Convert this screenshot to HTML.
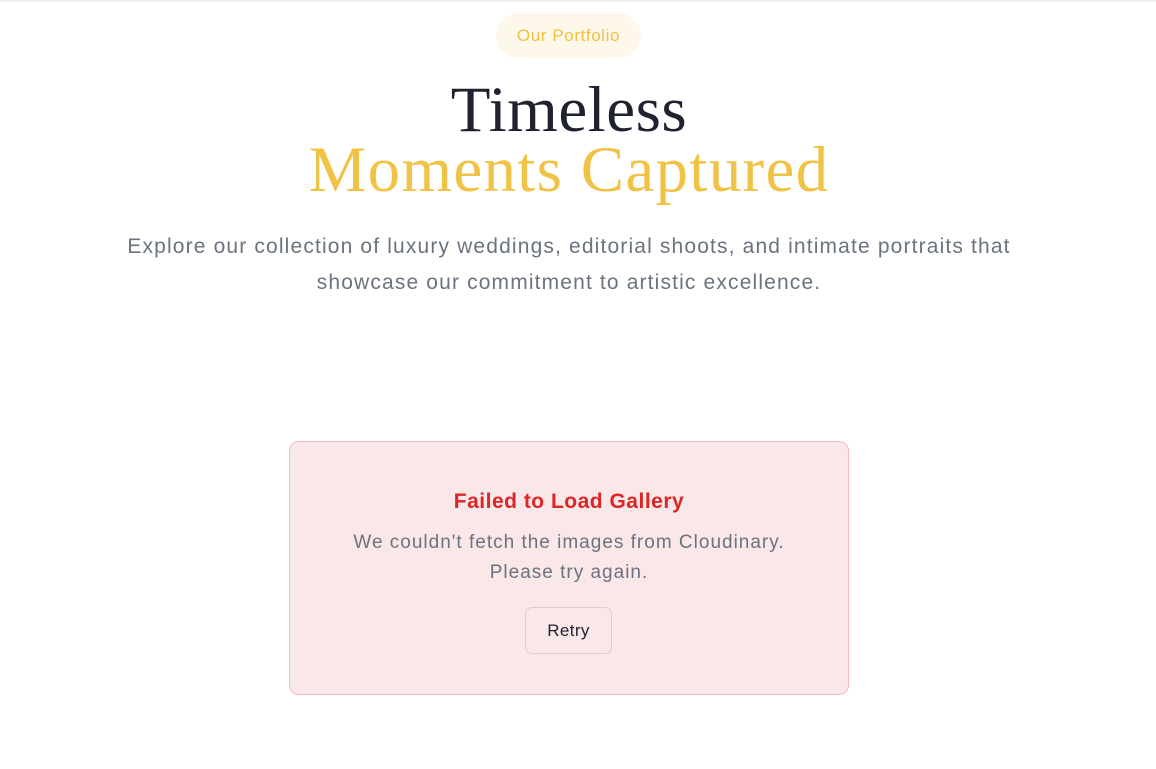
<!DOCTYPE html>
<html><head><meta charset="utf-8"><style>
html,body{margin:0;padding:0;background:#fff;width:1156px;height:769px;overflow:hidden;font-family:"Liberation Sans",sans-serif}
.topline{height:2px;background:#f1f1f1}
.pill{position:absolute;left:496px;top:13px;width:145px;height:45px;border-radius:23px;background:#fdf8ea;color:#f0c040;font-size:17px;letter-spacing:0.6px;line-height:45px;text-align:center}
h1{position:absolute;left:0;width:1138px;top:80px;margin:0;text-align:center;font-family:"Liberation Serif",serif;font-weight:400;font-size:65px;line-height:60px;color:#1f2230;letter-spacing:0.5px}
h1 span{color:#f0c245;display:block;letter-spacing:1.3px}
.sub{position:absolute;left:40px;width:1058px;top:229px;text-align:center;font-size:21px;letter-spacing:1.15px;line-height:36px;color:#6b7280;margin:0}
.box{position:absolute;left:289px;top:441px;width:558px;height:252px;background:#fae7e8;border:1px solid #f5b8bb;border-radius:10px;text-align:center}
.box h2{margin:0;position:absolute;top:48px;width:100%;font-size:21px;letter-spacing:0.5px;font-weight:700;color:#dc2626}
.box p{margin:0;position:absolute;top:86px;width:100%;font-size:19px;letter-spacing:1px;line-height:30px;color:#6b7280}
.btn{position:absolute;left:235px;top:165px;width:85px;height:45px;border:1px solid #e8c8cb;border-radius:7px;line-height:45px;font-size:17px;letter-spacing:0.4px;color:#1f2230}
</style></head><body>
<div class="topline"></div>
<div class="pill">Our Portfolio</div>
<h1>Timeless<span>Moments Captured</span></h1>
<p class="sub">Explore our collection of luxury weddings, editorial shoots, and intimate portraits that<br>showcase our commitment to artistic excellence.</p>
<div class="box">
<h2>Failed to Load Gallery</h2>
<p>We couldn't fetch the images from Cloudinary.<br>Please try again.</p>
<div class="btn">Retry</div>
</div>
</body></html>
